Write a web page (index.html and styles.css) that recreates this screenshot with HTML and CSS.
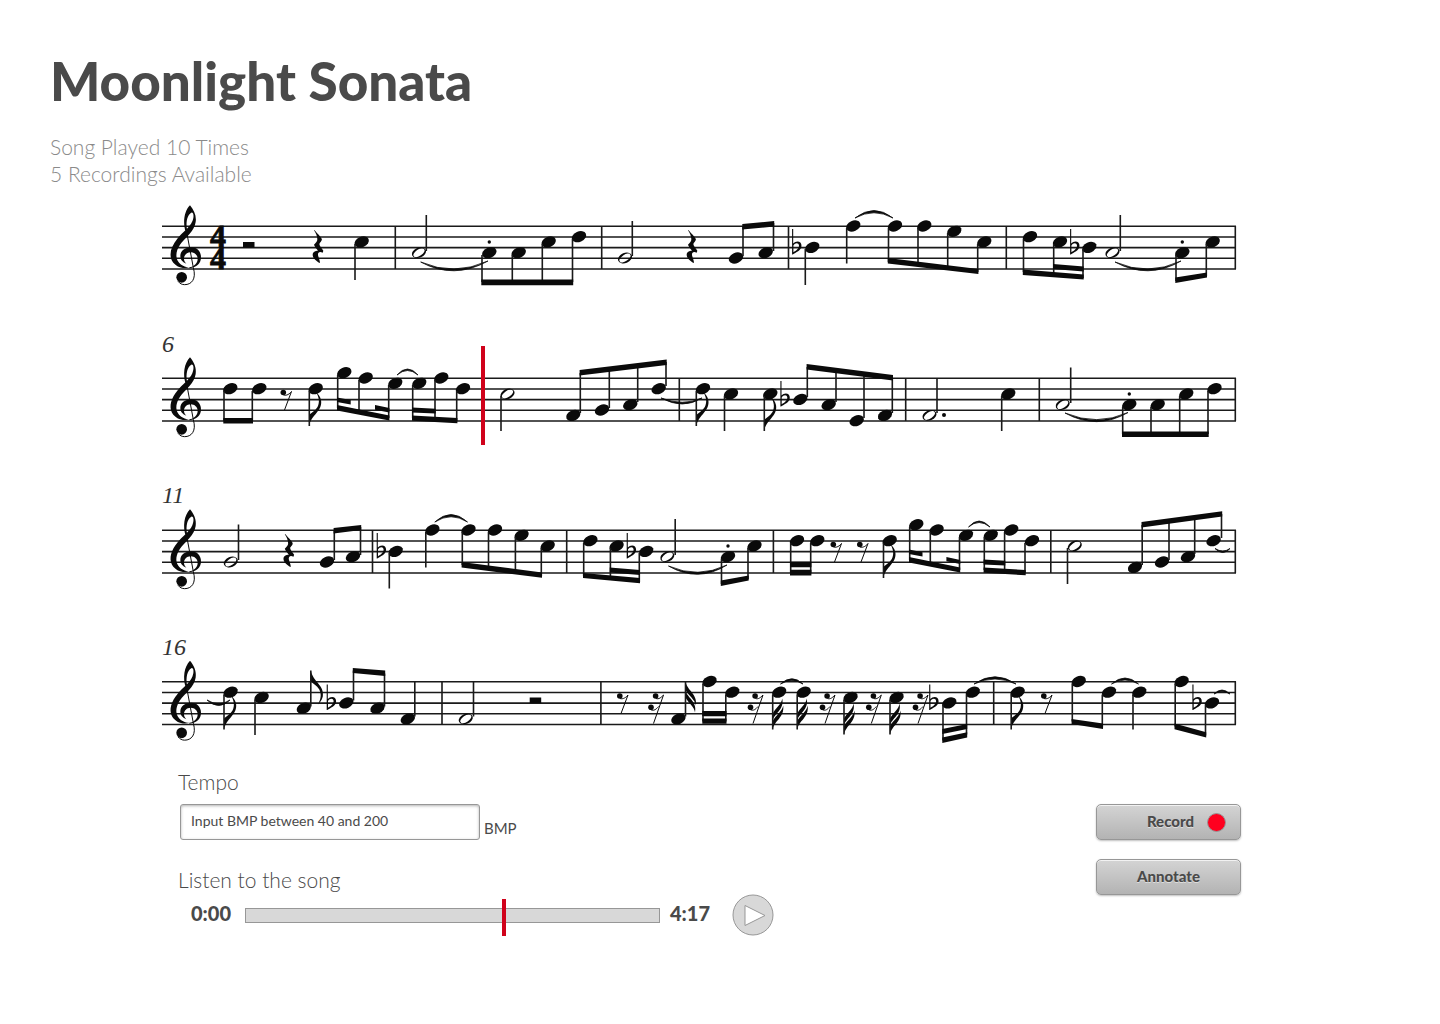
FILE: index.html
```html
<!DOCTYPE html>
<html lang="en">
<head>
<meta charset="utf-8">
<meta name="viewport" content="width=device-width, initial-scale=1">
<title>Moonlight Sonata</title>
<link rel="stylesheet" href="styles.css">
</head>
<body>
<main class="page">
  <header class="song">
    <h1 class="song-title">Moonlight Sonata</h1>
    <p class="song-stats">Song Played 10 Times<br>5 Recordings Available</p>
  </header>

  <svg class="score" viewBox="150 195 1100 560" role="img" aria-label="Sheet music, bars 1 to 19">
    <defs>
      <path id="staff" class="line" d="M162 .3H1236M162 11H1236M162 21.6H1236M162 32.3H1236M162 43H1236M1235.3 0V43"/>
      <g id="clef" transform="translate(150 0) scale(.3333)">
        <path d="M137-12C133 18 104 36 90 56C78 74 76 92 84 106C92 118 106 124 118 124C98 130 76 122 66 104C56 84 64 60 82 38C98 18 118 6 127-14C133-28 131-42 124-40C112-34 107-12 111 10L113 20L107 18C98-10 102-44 120-62C132-48 140-30 137-12Z"/>
        <path d="M118 127C140 125 153 112 153 94C153 76 140 64 124 64C104 64 91 76 91 90C91 101 98 109 109 113C103 107 102 102 102 98C102 88 110 79 122 79C134 79 143 88 143 98C143 112 132 122 118 124Z"/>
        <path class="thin" d="M110 18L130 125C140 160 124 176 104 176C96 176 90 173 84 166"/>
        <circle cx="95" cy="154" r="16"/>
      </g>
      <ellipse id="n" rx="7.500" ry="5.200" transform="rotate(-24)"/>
      <path id="h" fill-rule="evenodd" transform="rotate(-22)" d="M-7.3 0a7.3 5 0 1 0 14.6 0a7.3 5 0 1 0-14.6 0ZM-6 1.3a6.2 2.8-12 1 0 12-2.6a6.2 2.8-12 1 0-12 2.6Z"/>
      <rect id="hr" y="16" width="11.5" height="5.6"/>
      <path id="qr" transform="scale(.3333)" d="M-11 12C-4 20 8 32 11 38C14 44 6 48 4 54C4 60 12 68 16 74L14 80C4 75-1 80 0 88C2 96 6 104 6 111C-5 106-16 96-16 86C-16 78-8 74 0 74C-4 68-10 62-12 56C-6 50-2 46-2 40C-2 32-6 22-12 13Z"/>
      <g id="er"><circle cx="2.8" cy="14.5" r="2.8"/><path class="hair" d="M3 17C6 18 9 16 11 13.5L4 32"/></g>
      <g id="sr"><circle cx="7.6" cy="14.5" r="2.8"/><circle cx="3" cy="25.8" r="2.8"/><path class="hair" d="M8 17C11 18 13 16 15.5 13.5L5.5 42M3 28.300C6 29.500 8 28 10.500 25"/></g>
      <path id="f" d="M0 0C2-11 14-15 12-26C11-30 9-32 7-34C10-29 11-24 8.500-19C6-15 2-13 0-11Z"/>
      <path id="ff" d="M0 0C1.500-9 12-12 10.500-24C9.500-18 3-14 0-8.500ZM0-9C1.500-16 12-20 9.500-31C9-25 3-22 0-16Z"/>
      <path id="fl" fill-rule="evenodd" d="M-.6-18.500H.5V-4C3-7 9-7 8.800-1.500C8.500 3 3 5 0 7H-.6ZM.7-2V4.800C3.500 3 6.500 1 6.300-2C6-5 2.500-5 .7-2Z"/>
    </defs>

    <!-- Bars 1-5 -->
    <g transform="translate(0 226)">
      <use href="#staff"/><use href="#clef"/>
      <text class="meter"><tspan x="210" y="21">4</tspan><tspan x="210" y="43">4</tspan></text>
      <use href="#hr" x="243"/><use href="#qr" x="318"/><use href="#n" x="361.700" y="16"/>
      <use href="#h" x="419" y="26.700"/><circle cx="489.300" cy="16" r="1.700"/><use href="#n" x="489.300" y="26.700"/><use href="#n" x="518.700" y="26.700"/><use href="#n" x="548.700" y="16"/><use href="#n" x="579" y="10.700"/>
      <use href="#h" x="625" y="32"/><use href="#qr" x="692"/><use href="#n" x="736" y="32"/><use href="#n" x="765.700" y="26.700"/>
      <use href="#fl" x="792.700" y="21.400"/><use href="#n" x="812.300" y="21.400"/><use href="#n" x="853.300" y="0"/><use href="#n" x="895" y="0"/><use href="#n" x="924.300" y="0"/><use href="#n" x="954.300" y="5.300"/><use href="#n" x="984.300" y="16"/>
      <use href="#n" x="1030" y="10.700"/><use href="#n" x="1060" y="16"/><use href="#fl" x="1070.700" y="21.400"/><use href="#n" x="1089.300" y="21.400"/><use href="#h" x="1112.500" y="26.700"/><circle cx="1182.300" cy="16" r="1.700"/><use href="#n" x="1182.300" y="26.700"/><use href="#n" x="1212.700" y="16"/>
      <path class="line" d="M395.300 0V43M601.700 0V43M788.500 0V43M1006.300 0V43"/>
      <path class="stem" d="M355 18V54M426.300 25V-11M482 29V56M512.300 29V56M542.300 18V56M572.500 13V56M632.300 30V-5M743 30V0M773.500 25V-3M805.300 23V59M846.700 2V37.500M888.500 2V36M918 2V39M947.700 7V43M977.700 18V46M1023.500 13V46M1053.700 18V49M1083 23V52M1120.300 25V-11M1176 29V55M1206.300 18V50"/>
      <path d="M481.300 53.500H573.200V59.300H481.300ZM742.300-2L774.200-5V.5L742.300 3.500ZM887.800 32L978.400 43V48L887.800 37.500ZM1022.800 43.500L1083.700 48.500V53.500L1022.800 49ZM1053 38L1083.700 40.500V45.500L1053 43ZM1175.300 51.500L1207 46.500V51.500L1175.300 57Z"/>
      <path class="tie" d="M420.700 36Q454 54 488 35Q454 50.500 420.700 36ZM855-8Q874-23 893-8Q874-18.500 855-8ZM1115 36Q1148 54 1181 35Q1148 50.500 1115 36Z"/>
    </g>

    <!-- Bars 6-10 -->
    <g transform="translate(0 378)">
      <text class="bar-number" x="162" y="-26">6</text>
      <use href="#staff"/><use href="#clef"/>
      <use href="#n" x="230.300" y="10.700"/><use href="#n" x="259.300" y="10.700"/><use href="#er" x="280.500"/><use href="#n" x="315.700" y="10.700"/><use href="#f" x="309" y="48"/>
      <use href="#n" x="344.300" y="-5.300"/><use href="#n" x="365.700" y="0"/><use href="#n" x="395.300" y="5.300"/><use href="#n" x="419.300" y="5.300"/><use href="#n" x="441.300" y="0"/><use href="#n" x="463" y="10.700"/>
      <use href="#h" x="507.500" y="16"/><use href="#n" x="573.300" y="37.400"/><use href="#n" x="602" y="32"/><use href="#n" x="630.300" y="26.700"/><use href="#n" x="658.700" y="10.700"/>
      <use href="#n" x="703" y="10.700"/><use href="#f" x="696.300" y="48"/><use href="#n" x="731" y="16"/><use href="#n" x="770.300" y="16"/><use href="#f" x="764" y="53"/><use href="#fl" x="781" y="21.400"/><use href="#n" x="800.300" y="21.400"/><use href="#n" x="828.700" y="26.700"/><use href="#n" x="856.700" y="42.700"/><use href="#n" x="885" y="37.400"/>
      <use href="#h" x="929.500" y="37.400"/><circle cx="944" cy="37" r="2"/><use href="#n" x="1008.300" y="16"/>
      <use href="#h" x="1062.700" y="26.700"/><circle cx="1129.300" cy="16" r="1.700"/><use href="#n" x="1129.300" y="26.700"/><use href="#n" x="1157.700" y="26.700"/><use href="#n" x="1186.300" y="16"/><use href="#n" x="1214.500" y="10.700"/>
      <path class="line" d="M679.300 0V43M905.700 0V43M1039.300 0V43"/>
      <path class="stem" d="M224 13V43M252.300 13V43M309.300 13V48M337.700-3V30M359 2V34M388.700 7V40M412.700 7V40M435 2V42M456.700 13V43M501 18V53M580.300 35V-5M609.300 30V-9M637.700 24V-12M666 8V-16M696.300 13V48M724.500 18V53M764.300 18V53M807.300 19V-11M836 24V-8M864 40V-4M892.300 35V0M937 35V0M1001.700 18V53M1070.700 25V-10.500M1122.700 29V56M1151 29V56M1179.700 18V56M1208 13V56"/>
      <path d="M223.300 40H253V45.500H223.300ZM337 27L389.400 37.500V42.500L337 32.500ZM337 19.500L350.700 22V26.500L337 24ZM375 27L389.400 30V34.500L375 31.700ZM412 37.500L457.400 40V45.300L412 42.700ZM412 29.500L435.700 30.700V35.500L412 34.500ZM579.600-8L666.700-18.500V-13L579.600-2.500ZM806.600-14L893-3V2.500L806.600-8.500ZM1122 53.500H1208.700V59H1122Z"/>
      <path class="tie" d="M397-3Q407.500-15 418-3Q407.500-12 397-3ZM661 20Q683 32 702 20Q683 28.500 661 20ZM1065 35Q1097 52.500 1128 34.500Q1097 48.500 1065 35Z"/>
      <rect class="playhead" x="481" y="-32" width="4" height="99"/>
    </g>

    <!-- Bars 11-15 -->
    <g transform="translate(0 530)">
      <text class="bar-number" x="162" y="-27">11</text>
      <use href="#staff"/><use href="#clef"/>
      <use href="#h" x="230.800" y="32"/><use href="#qr" x="288.800"/><use href="#n" x="327" y="32"/><use href="#n" x="353" y="26.700"/>
      <use href="#fl" x="377.300" y="21.400"/><use href="#n" x="395.700" y="21.400"/><use href="#n" x="432.400" y="0"/><use href="#n" x="468.500" y="0"/><use href="#n" x="495" y="0"/><use href="#n" x="521.600" y="5.300"/><use href="#n" x="547.700" y="16"/>
      <use href="#n" x="590.400" y="10.700"/><use href="#n" x="616.600" y="16"/><use href="#fl" x="627.300" y="21.400"/><use href="#n" x="646.200" y="21.400"/><use href="#h" x="667.300" y="26.700"/><circle cx="728" cy="16" r="1.700"/><use href="#n" x="728" y="26.700"/><use href="#n" x="754.500" y="16"/>
      <use href="#n" x="797" y="10.700"/><use href="#n" x="817.300" y="10.700"/><use href="#er" x="830.500"/><use href="#er" x="857"/><use href="#n" x="889.700" y="10.700"/><use href="#f" x="883.300" y="48"/>
      <use href="#n" x="916.300" y="-5.300"/><use href="#n" x="936.600" y="0"/><use href="#n" x="966" y="5.300"/><use href="#n" x="990.800" y="5.300"/><use href="#n" x="1011.200" y="0"/><use href="#n" x="1032" y="10.700"/>
      <use href="#h" x="1074.800" y="16"/><use href="#n" x="1135" y="37.400"/><use href="#n" x="1162" y="32"/><use href="#n" x="1188" y="26.700"/><use href="#n" x="1213.600" y="10.700"/>
      <path class="line" d="M372.500 0V43M566.700 0V43M773.400 0V43M1050.800 0V43"/>
      <path class="stem" d="M238.500 30V-5.500M334.300 30V0M360.500 25V-3M389.300 23V58.500M425.800 2V37.500M462.300 2V35M488.500 2V39M515.400 7V42M541.300 18V46M583.700 13V46M610.400 18V49M639.300 23V52M675.200 25V-11M721.500 29V54M748 18V49M790.700 13V43M810.700 13V43M883.500 13V48M909.700-3V30M930.300 2V34M959.500 7V40M984.300 7V40M1004.600 2V42M1025 13V43M1067.500 18V54M1142.200 35V-5M1169 30V-9M1194.700 24V-12M1221.500 8V-16"/>
      <path d="M333.600-2L361.200-5V0L333.600 3.500ZM461.600 32L542 42.500V47.700L461.600 37.500ZM583 43L640 48V53.300L583 48ZM609.700 37.500L640 40V45L609.700 42.500ZM720.800 50.500L748.700 45.500V50.500L720.800 56ZM790 31.700H811.400V37.300H790ZM790 39.700H811.400V45.500H790ZM909 27L960.200 37.500V42.500L909 32.500ZM909 19.500L922.500 22.300V26.500L909 24ZM946.400 27L960.200 30V34L946.400 31.300ZM983.600 37.500L1025.700 40V45.300L983.600 42.700ZM983.600 29.500L1005.300 30.700V35.500L983.600 34.500ZM1141.500-8L1222.200-18.700V-13.500L1141.500-2.500Z"/>
      <path class="tie" d="M434.800-8Q451-23 467.500-8Q451-18.500 434.800-8ZM668.500 36Q698 53 727 35Q698 49 668.500 36ZM968.500-3Q979-15 990-3Q979-12 968.500-3ZM1215 18.500Q1223 26.500 1230 18.500Q1223 23.500 1215 18.500Z"/>
    </g>

    <!-- Bars 16-19 -->
    <g transform="translate(0 681.5)">
      <text class="bar-number" x="162" y="-27">16</text>
      <use href="#staff"/><use href="#clef"/>
      <use href="#n" x="230.600" y="10.700"/><use href="#f" x="224" y="48"/><use href="#n" x="261.600" y="16"/><use href="#n" x="303.800" y="26.700"/><use href="#f" transform="translate(310.800 -11) scale(1 -1)"/><use href="#fl" x="327.300" y="21.400"/><use href="#n" x="346.300" y="21.400"/><use href="#n" x="377.500" y="26.700"/><use href="#n" x="407.800" y="37.400"/>
      <use href="#h" x="465.800" y="37.400"/><use href="#hr" x="529.700"/><use href="#er" x="617"/><use href="#sr" x="648"/><use href="#n" x="678.400" y="37.400"/><use href="#ff" transform="translate(685.500 0) scale(1 -1)"/>
      <use href="#n" x="709.500" y="0"/><use href="#n" x="732.300" y="10.700"/><use href="#sr" x="747.500"/><use href="#n" x="779.200" y="10.700"/><use href="#ff" x="772.700" y="48"/><use href="#n" x="803.700" y="10.700"/><use href="#ff" x="797.200" y="48"/><use href="#sr" x="819.500"/><use href="#n" x="850.500" y="16"/><use href="#ff" x="844" y="53"/><use href="#sr" x="865.800"/><use href="#n" x="896.500" y="16"/><use href="#ff" x="890" y="53"/><use href="#sr" x="912.500"/><use href="#fl" x="929.800" y="21.400"/><use href="#n" x="949.300" y="21.400"/><use href="#n" x="972.800" y="10.700"/>
      <use href="#n" x="1017.600" y="10.700"/><use href="#f" x="1011" y="48"/><use href="#er" x="1041"/><use href="#n" x="1078.700" y="0"/><use href="#n" x="1109" y="10.700"/><use href="#n" x="1139.300" y="10.700"/><use href="#n" x="1181.600" y="0"/><use href="#fl" x="1193" y="21.400"/><use href="#n" x="1212" y="21.400"/>
      <path class="line" d="M442 0V43M600.900 0V43M993.700 0V43"/>
      <path class="stem" d="M224 13V48M255 18V53.500M310.800 25V-11M353.500 19V-11M384.500 25V-8M414.800 35V0M473.500 35V0M685.500 35V0M703 2V40M725.800 13V40M772.700 13V48M797.200 13V48M844 18V53M890 18V53M943 23V59M966.500 13V53M1011.200 13V48M1072.300 2V40M1102.300 13V46M1133 13V48M1175.200 2V45M1205.500 23V54"/>
      <path d="M352.800-13.500L385.200-11V-5.500L352.800-8.500ZM702.300 29.500H726.500V34.700H702.300ZM702.300 37H726.500V42.300H702.300ZM942.300 56L967.200 50.800V56L942.300 61.500ZM942.300 47.500L967.200 42.500V47.500L942.300 52.500ZM1071.600 37.500L1103 42V47.500L1071.600 42.500ZM1174.500 42L1206.200 50.800V56L1174.500 47.800Z"/>
      <path class="tie" d="M207 18.500Q219 29.500 230 18.500Q219 26 207 18.500ZM780.500 2.500Q792-8 803 2.500Q792-4.500 780.500 2.500ZM974 2.500Q995-12 1016 2.500Q995-7.500 974 2.500ZM1111.500 2.500Q1125-9.500 1138.500 2.500Q1125-5.500 1111.500 2.500ZM1214 12.500Q1222 4.500 1230 12.500Q1222 7.500 1214 12.500Z"/>
    </g>
  </svg>

  <section class="controls">
    <div class="playback">
      <label class="label" for="tempo">Tempo</label>
      <div class="tempo-row">
        <input class="tempo-input" id="tempo" type="text" inputmode="numeric" placeholder="Input BMP between 40 and 200">
        <span class="unit">BMP</span>
      </div>
      <label class="label" for="seek">Listen to the song</label>
      <div class="player">
        <span class="time">0:00</span>
        <input class="seek" id="seek" type="range" min="0" max="257" value="161">
        <span class="time">4:17</span>
        <button class="play" type="button" aria-label="Play">
          <svg class="play-icon" viewBox="0 0 42 42"><circle cx="21" cy="21" r="20"/><path d="M13 11.500L33 21.500L13 31.500Z"/></svg>
        </button>
      </div>
    </div>
    <div class="actions">
      <button class="button button-record" type="button"><span>Record</span><span class="record-dot"></span></button>
      <button class="button" type="button"><span>Annotate</span></button>
    </div>
  </section>
</main>
</body>
</html>
```
FILE: styles.css
```css
* {
  box-sizing: border-box;
}

body {
  margin: 0;
  background: #fff;
  color: #4a4a4a;
  font-family: Lato, "Open Sans", sans-serif;
}

.page {
  max-width: 1250px;
  padding: 51px 0 40px 50px;
}

.song-title {
  margin: 0;
  font-size: 53px;
  font-weight: 900;
  line-height: 60px;
}

.song-stats {
  margin: 22px 0 0;
  color: #8a8a8a;
  font-size: 21px;
  font-weight: 300;
  line-height: 27px;
}

.score {
  display: block;
  width: calc(100% - 100px);
  margin: 8px 0 0 100px;
  fill: #0a0a0a;
}

.line {
  fill: none;
  stroke: #1a1a1a;
  stroke-width: 1.6;
}

.stem {
  fill: none;
  stroke: #1a1a1a;
  stroke-width: 1.6;
}

.thin {
  fill: none;
  stroke: #0a0a0a;
  stroke-width: 3;
}

.hair {
  fill: none;
  stroke: #0a0a0a;
  stroke-width: 1;
}

.tie {
  stroke: #0a0a0a;
  stroke-width: .8;
}

.meter {
  stroke: #0a0a0a;
  stroke-width: .8;
  font: bold 32px "Liberation Serif", serif;
}

.bar-number {
  fill: #333;
  font: italic 24px "Liberation Serif", serif;
}

.playhead {
  fill: #d0021b;
}

.controls {
  display: flex;
  justify-content: space-between;
  margin: 13px 9px 0 128px;
}

.playback {
  display: flex;
  flex-direction: column;
}

.label {
  font-size: 21px;
  font-weight: 300;
  line-height: 28px;
}

.tempo-row {
  display: flex;
  align-items: flex-end;
  gap: 4px;
  margin: 8px 0 26px 2px;
}

.tempo-input {
  width: 300px;
  height: 36px;
  padding: 0 10px 3px;
  border: 1px solid #979797;
  border-radius: 3px;
  background: #fff;
  box-shadow: inset 0 1px 3px rgba(0, 0, 0, .3);
  color: #4a4a4a;
  font: 14px Lato, sans-serif;
}

.tempo-input::placeholder {
  color: #4a4a4a;
  opacity: 1;
}

.unit {
  font-size: 15px;
  line-height: 24px;
}

.player {
  display: flex;
  align-items: center;
  margin-left: 13px;
}

.time {
  width: 54px;
  padding-bottom: 4px;
  font-size: 20px;
  font-weight: 900;
  line-height: 24px;
}

.seek {
  width: 415px;
  height: 37px;
  margin: 0 10px 0 0;
  background: none;
  appearance: none;
}

.seek::-webkit-slider-runnable-track {
  height: 15px;
  border: 1px solid #979797;
  background: #d8d8d8;
}

.seek::-webkit-slider-thumb {
  width: 4px;
  height: 37px;
  margin-top: -10px;
  background: #d0021b;
  appearance: none;
}

.play {
  width: 42px;
  height: 42px;
  margin-left: 8px;
  padding: 0;
  border: 0;
  border-radius: 50%;
  background: none;
}

.play-icon {
  display: block;
  fill: #d8d8d8;
  stroke: #979797;
}

.play-icon path {
  fill: #fff;
}

.actions {
  display: flex;
  flex-direction: column;
  gap: 19px;
  padding-top: 36px;
}

.button {
  display: flex;
  align-items: center;
  justify-content: center;
  gap: 13px;
  width: 145px;
  height: 36px;
  padding: 0;
  border: 1px solid #979797;
  border-radius: 5px;
  background: linear-gradient(#d4d4d4, #b3b3b3);
  box-shadow: inset 0 1px 0 #f2f2f2, 0 1px 2px rgba(0, 0, 0, .25);
  color: #4a4a4a;
  font: 900 15px Lato, sans-serif;
  text-shadow: 0 1px 0 rgba(255, 255, 255, .5);
}

.button span:first-child {
  padding-bottom: 3px;
}

.button-record {
  justify-content: flex-end;
  padding-right: 14px;
}

.record-dot {
  width: 19px;
  height: 19px;
  border: 1px solid #979797;
  border-radius: 50%;
  background: #ff001f;
}
```
